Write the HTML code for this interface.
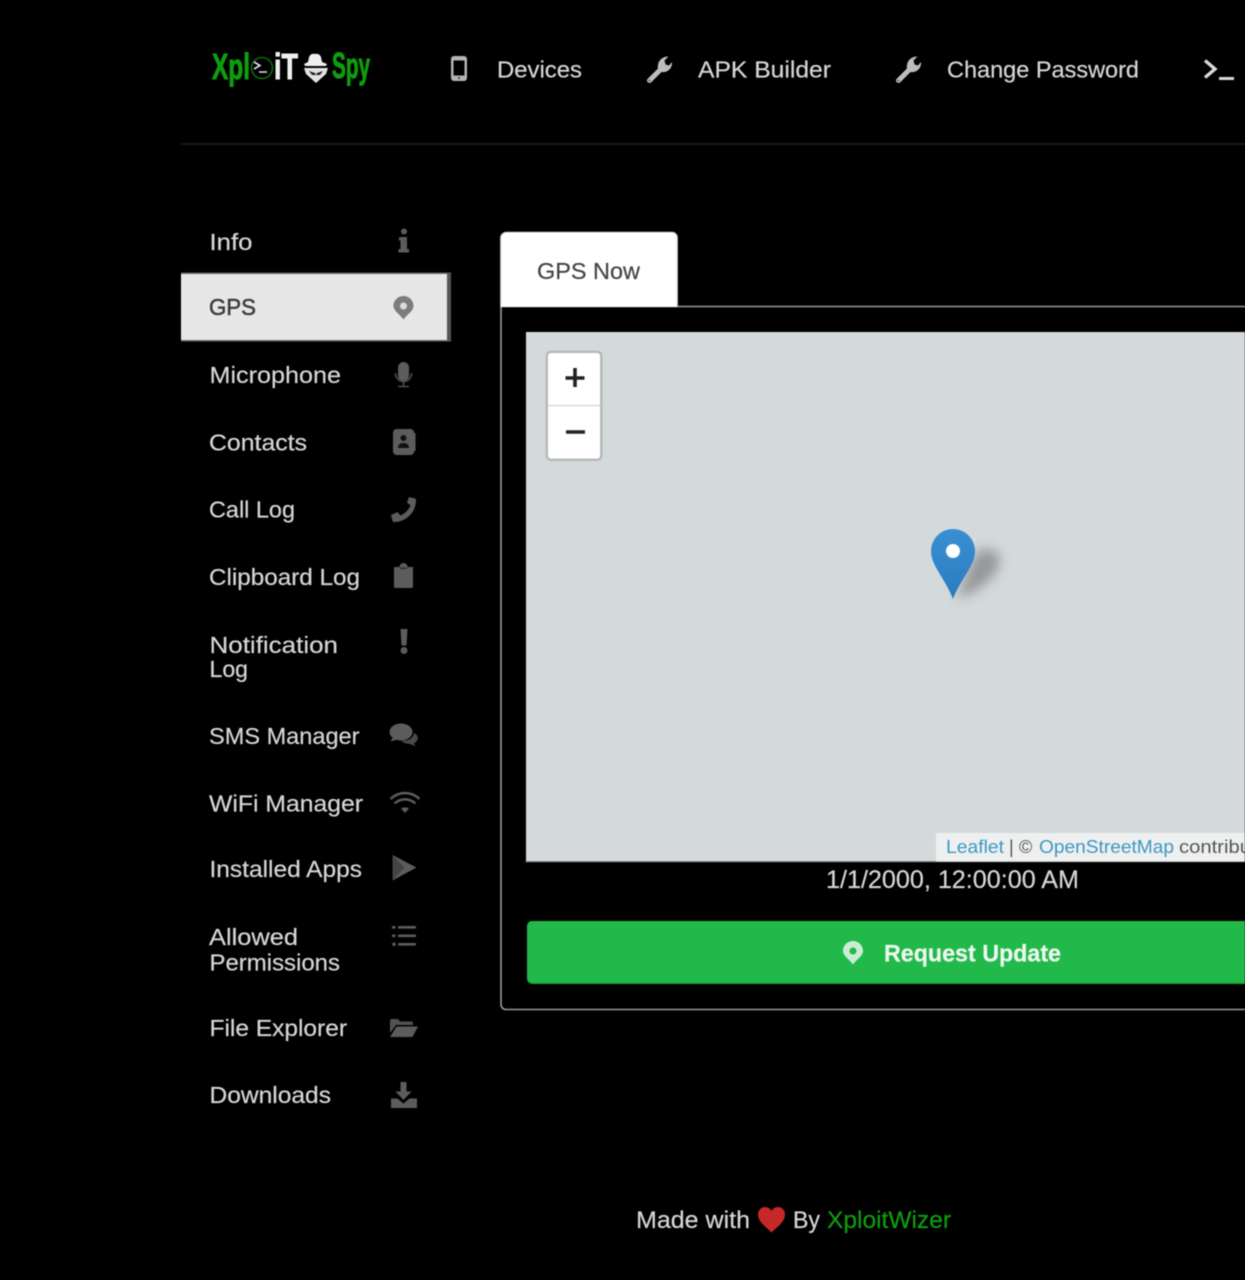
<!DOCTYPE html>
<html lang="en">
<head>
<meta charset="utf-8">
<title>XploitSpy - GPS</title>
<style>
html,body{margin:0;padding:0;background:#000;width:1245px;height:1280px;overflow:hidden}
svg.page{display:block;filter:blur(.5px)}
text{font-family:"Liberation Sans",sans-serif;font-size:23px;fill:#d6d6d6;stroke:#d6d6d6;stroke-width:.2}
.ic{fill:#5c5c5c}
.lg{font-weight:bold;font-size:36px;fill:#0f9d0f;stroke:#0f9d0f;stroke-width:.9}
.gr{fill:#3c3c3c;stroke:#3c3c3c;stroke-width:.5}
.tb{fill:#444;stroke:#444;stroke-width:.2}
.at{font-size:18px;fill:#3f97c4;stroke:none}
.ag{font-size:18px;fill:#555;stroke:none}
.ft{font-size:24px}
</style>
</head>
<body>
<svg class="page" xmlns="http://www.w3.org/2000/svg" width="1245" height="1280" viewBox="0 0 1245 1280">
<defs>
<filter id="sh" x="-60%" y="-60%" width="220%" height="220%"><feGaussianBlur stdDeviation="6"/></filter>
<linearGradient id="mk" x1="0" y1="0" x2="0" y2="1"><stop offset="0" stop-color="#3a8fd2"/><stop offset="1" stop-color="#2a7cc0"/></linearGradient>
<g id="wr">
<path d="M3.500 24.500 L14 14" stroke="#bdbdbd" stroke-width="5" stroke-linecap="round" fill="none"/>
<path d="M12 13 C11 6 15 0.500 22.500 0.500 L18.500 4.500 L19.500 8.500 L23 9.500 L26 6 C26.500 12.500 21.500 17 15 16z" fill="#bdbdbd"/>
<circle cx="3.400" cy="24.600" r="1" fill="#555"/>
</g>
</defs>

<rect width="1245" height="1280" fill="#000"/>

<!-- Logo -->
<text class="lg" x="212" y="79" textLength="38" lengthAdjust="spacingAndGlyphs">Xpl</text>
<circle cx="262" cy="68" r="10.500" fill="none" stroke="#0d6b0d" stroke-width="1.600"/>
<path d="M254 62l6 3.500-6 3.500M259 72h8" fill="none" stroke="#e4e4e4" stroke-width="1.600"/>
<text class="lg" x="274" y="79" textLength="24" lengthAdjust="spacingAndGlyphs" style="fill:#f0f0f0;stroke:#f0f0f0">iT</text>
<path d="M309 57q2-4 6-3 4-1 6 3l1 5 5 2-1 2H305l-1-2 4-2z" fill="#efefef"/>
<path d="M304 68h24l-2 6-10 9-10-9z" fill="#e2e2e2"/>
<path d="M309 71l6 2 1 2-4 0zM323 71l-6 2-1 2 4 0z" fill="#222"/>
<text class="lg" x="332" y="78" textLength="38" lengthAdjust="spacingAndGlyphs">Spy</text>

<!-- Top nav -->
<path fill-rule="evenodd" d="M454 56h10a3 3 0 0 1 3 3v19a3 3 0 0 1-3 3h-10a3 3 0 0 1-3-3V59a3 3 0 0 1 3-3zm-.500 4.500v15h11v-15z" fill="#b4b4b4"/>
<circle cx="459" cy="78" r="1" fill="#333"/>
<text x="497" y="77.500" textLength="85" lengthAdjust="spacingAndGlyphs">Devices</text>
<use href="#wr" x="646" y="56"/>
<text x="698" y="77.500" textLength="133" lengthAdjust="spacingAndGlyphs">APK Builder</text>
<use href="#wr" x="895" y="56"/>
<text x="947" y="77.500" textLength="192" lengthAdjust="spacingAndGlyphs">Change Password</text>
<path d="M1205 60.500l10 8.500-10 8.500" fill="none" stroke="#d8d8d8" stroke-width="3.400"/>
<rect x="1219" y="77" width="15" height="3" fill="#d8d8d8"/>
<rect x="181" y="143" width="1064" height="2" fill="#191919"/>

<!-- Active item -->
<rect x="181" y="273" width="270" height="68" fill="#e7e7e7"/>
<rect x="181" y="272.500" width="270" height="1.500" fill="#666"/>
<rect x="181" y="340" width="270" height="1.500" fill="#666"/>
<rect x="447" y="273" width="4" height="68" fill="#555"/>

<!-- Sidebar labels -->
<text x="209.500" y="250" textLength="43" lengthAdjust="spacingAndGlyphs">Info</text>
<text class="gr" x="209" y="315" textLength="47" lengthAdjust="spacingAndGlyphs">GPS</text>
<text x="209.500" y="383" textLength="131.500" lengthAdjust="spacingAndGlyphs">Microphone</text>
<text x="209" y="450.500" textLength="98" lengthAdjust="spacingAndGlyphs">Contacts</text>
<text x="209" y="517.500" textLength="86" lengthAdjust="spacingAndGlyphs">Call Log</text>
<text x="209" y="585" textLength="151" lengthAdjust="spacingAndGlyphs">Clipboard Log</text>
<text x="209.500" y="653" textLength="128.500" lengthAdjust="spacingAndGlyphs">Notification</text>
<text x="209.500" y="677" textLength="38.500" lengthAdjust="spacingAndGlyphs">Log</text>
<text x="209" y="744" textLength="150.500" lengthAdjust="spacingAndGlyphs">SMS Manager</text>
<text x="209" y="811.500" textLength="154" lengthAdjust="spacingAndGlyphs">WiFi Manager</text>
<text x="209.500" y="877" textLength="152.500" lengthAdjust="spacingAndGlyphs">Installed Apps</text>
<text x="209" y="945" textLength="89" lengthAdjust="spacingAndGlyphs">Allowed</text>
<text x="209.500" y="970.500" textLength="130.500" lengthAdjust="spacingAndGlyphs">Permissions</text>
<text x="209.500" y="1036" textLength="137.500" lengthAdjust="spacingAndGlyphs">File Explorer</text>
<text x="209.500" y="1103" textLength="121.500" lengthAdjust="spacingAndGlyphs">Downloads</text>

<!-- Sidebar icons -->
<circle class="ic" cx="404" cy="231.500" r="3"/>
<path class="ic" d="M399 237h8v12h2v3.500h-10.500V249h2v-8.500H399z"/>
<path d="M403.500 296c-5.600 0-10 4.400-10 10 0 5 6.500 8.500 10 13.500 3.500-5 10-8.500 10-13.500 0-5.600-4.400-10-10-10z" fill="#7c7c7c"/>
<circle cx="403.500" cy="306" r="3.500" fill="#dcdcdc"/>
<rect class="ic" x="398" y="362" width="11" height="19" rx="5.500"/>
<path d="M395.500 373c0 5 3.500 8.500 8 8.500s8-3.500 8-8.500M403.500 382v4M398 386.500h11" fill="none" stroke="#4e4e4e" stroke-width="1.600"/>
<rect class="ic" x="393" y="429" width="21" height="26" rx="3.500"/>
<rect class="ic" x="413" y="433" width="2.500" height="18"/>
<circle cx="403.500" cy="438" r="3" fill="#111"/>
<path d="M398 448c0-3.500 2-5 5.500-5s5.500 1.500 5.500 5z" fill="#111"/>
<path class="ic" d="M409 497l6 1.500c.8 0 1 .7 1 1.500 0 12-9.500 22-22 22-.8 0-1.500-.4-1.500-1.200L391 515l6.500-3 3 3.500c4.500-2 8-5.500 10-10l-3.500-3z"/>
<path class="ic" d="M394 567h5.500a4 4 0 0 1 8 0h5.500v19.500a1.500 1.500 0 0 1-1.500 1.500h-16a1.500 1.500 0 0 1-1.500-1.500z"/>
<rect x="400" y="567.500" width="7" height="1.300" fill="#2a2a2a"/>
<path class="ic" d="M400.500 629h7l-1 16.500h-5z"/>
<circle class="ic" cx="404" cy="650.500" r="3.500"/>
<ellipse class="ic" cx="401" cy="732" rx="11.500" ry="8.500"/>
<path class="ic" d="M393 737l-2.500 4.500 7-2z"/>
<path d="M414 733c3 1.500 4.300 4 3.500 6.500-.5 1.800-2 3-3.500 3.800l1.500 3-6-2.500c-3.500 0-6.500-1-8-3 6.500 0 12-2.500 12.500-7.800z" fill="#4a4a4a"/>
<path d="M390.500 799c8.500-8 20.500-8 29 0M394.500 803.500c6-5.500 15-5.500 21 0" fill="none" stroke="#5c5c5c" stroke-width="2.400"/>
<path d="M401 808.500c2-1.500 6-1.500 8 0l-4 4.500z" fill="#5c5c5c"/>
<path class="ic" d="M392.500 855l24 12.500-24 13z"/>
<path d="M392.500 855l12 12.500-12 13z" fill="#444"/>
<g class="ic">
<rect x="398" y="926" width="18" height="2.600" rx="1"/><rect x="398" y="934.500" width="18" height="2.600" rx="1"/><rect x="398" y="943" width="18" height="2.600" rx="1"/>
<rect x="392" y="926" width="3.500" height="2.600"/><rect x="392" y="934.500" width="3.500" height="2.600"/><circle cx="394" cy="944.300" r="1.800"/>
</g>
<path d="M390 1021a2 2 0 0 1 2-2h6l2 2.500h11a2 2 0 0 1 2 2v1.500h-17l-6 8z" fill="#525252"/>
<path class="ic" d="M396.500 1026.500H418l-5.500 10.500H390z"/>
<path class="ic" d="M400.500 1082h6v9.500h5l-8 8.500-8-8.500h5z"/>
<path class="ic" d="M391 1098.500h6.500l6 5 6-5h7.500v9.500h-26z"/>

<!-- Panel + tab -->
<path d="M1246 306.500H501V1004.500a5 5 0 0 0 5 5H1246" fill="none" stroke="#9a9a9a" stroke-width="1.600"/>
<path d="M500 307V238a6 6 0 0 1 6-6H672a6 6 0 0 1 6 6V307z" fill="#fff"/>
<path d="M500.500 307V238a6 6 0 0 1 6-6H672a5.500 5.500 0 0 1 5.500 6V307" fill="none" stroke="#999" stroke-width=".8"/>
<text class="tb" x="537" y="279" textLength="103" lengthAdjust="spacingAndGlyphs">GPS Now</text>

<!-- Map -->
<rect x="526" y="332" width="719" height="530" fill="#d4dadc"/>
<rect x="525.500" y="861" width="720" height="1.200" fill="#888"/>
<rect x="546.800" y="351.800" width="54.500" height="108" rx="4" fill="#fff" stroke="#b5b8b8" stroke-width="2.400"/>
<rect x="548" y="405" width="53" height="1" fill="#ccc"/>
<path d="M575 368v19M565.500 378h19" stroke="#222" stroke-width="3.600" fill="none"/>
<path d="M566 432h19" stroke="#222" stroke-width="3.600" fill="none"/>

<!-- Marker -->
<path d="M956 598L976 552c10-6 24-2 24 8 0 14-22 34-44 38z" fill="#6c6c6c" opacity=".6" filter="url(#sh)"/>
<path d="M953 599C945 578 931 566 931 551a22 22 0 0 1 44 0C975 566 961 578 953 599z" fill="url(#mk)"/>
<circle cx="953" cy="551" r="7" fill="#fff"/>

<!-- Attribution -->
<rect x="936" y="833" width="309" height="28.500" fill="#eef0f0"/>
<text class="at" x="946" y="853" textLength="58" lengthAdjust="spacingAndGlyphs">Leaflet</text>
<text class="ag" x="1009" y="853">|</text>
<text class="ag" x="1019" y="853">©</text>
<text class="at" x="1039" y="853" textLength="135" lengthAdjust="spacingAndGlyphs">OpenStreetMap</text>
<text class="ag" x="1179" y="853" textLength="72" lengthAdjust="spacingAndGlyphs">contribu</text>

<!-- Date -->
<text x="826" y="888" textLength="253" lengthAdjust="spacingAndGlyphs" style="font-size:25px">1/1/2000, 12:00:00 AM</text>

<!-- Button -->
<rect x="527" y="921" width="740" height="63" rx="5" fill="#1d9a3f"/>
<rect x="527" y="921" width="740" height="61.500" rx="5" fill="#21b94a"/>
<path d="M853 941c-5.500 0-10 4.400-10 10 0 5 6.500 8.500 10 13.500 3.500-5 10-8.500 10-13.500 0-5.600-4.500-10-10-10z" fill="#c9eed3"/>
<circle cx="853" cy="951" r="3.500" fill="#21b94a"/>
<text x="884" y="961.500" textLength="177" lengthAdjust="spacingAndGlyphs" style="fill:#eef8f0;stroke:#eef8f0;font-weight:bold;font-size:24px">Request Update</text>

<!-- Footer -->
<text class="ft" x="636" y="1228" textLength="114" lengthAdjust="spacingAndGlyphs">Made with</text>
<path d="M771.500 1232.500c-5-5-13.500-10.500-13.500-18 0-4.500 3.200-7.500 7-7.500 3 0 5.200 1.500 6.500 4 1.300-2.500 3.500-4 6.500-4 3.800 0 7 3 7 7.500 0 7.500-8.500 13-13.500 18z" fill="#c62828"/>
<text class="ft" x="793" y="1228" textLength="27" lengthAdjust="spacingAndGlyphs">By</text>
<text class="ft" x="827" y="1228" textLength="124" lengthAdjust="spacingAndGlyphs" style="fill:#0f9d0f;stroke:#0f9d0f">XploitWizer</text>
</svg>
</body>
</html>
